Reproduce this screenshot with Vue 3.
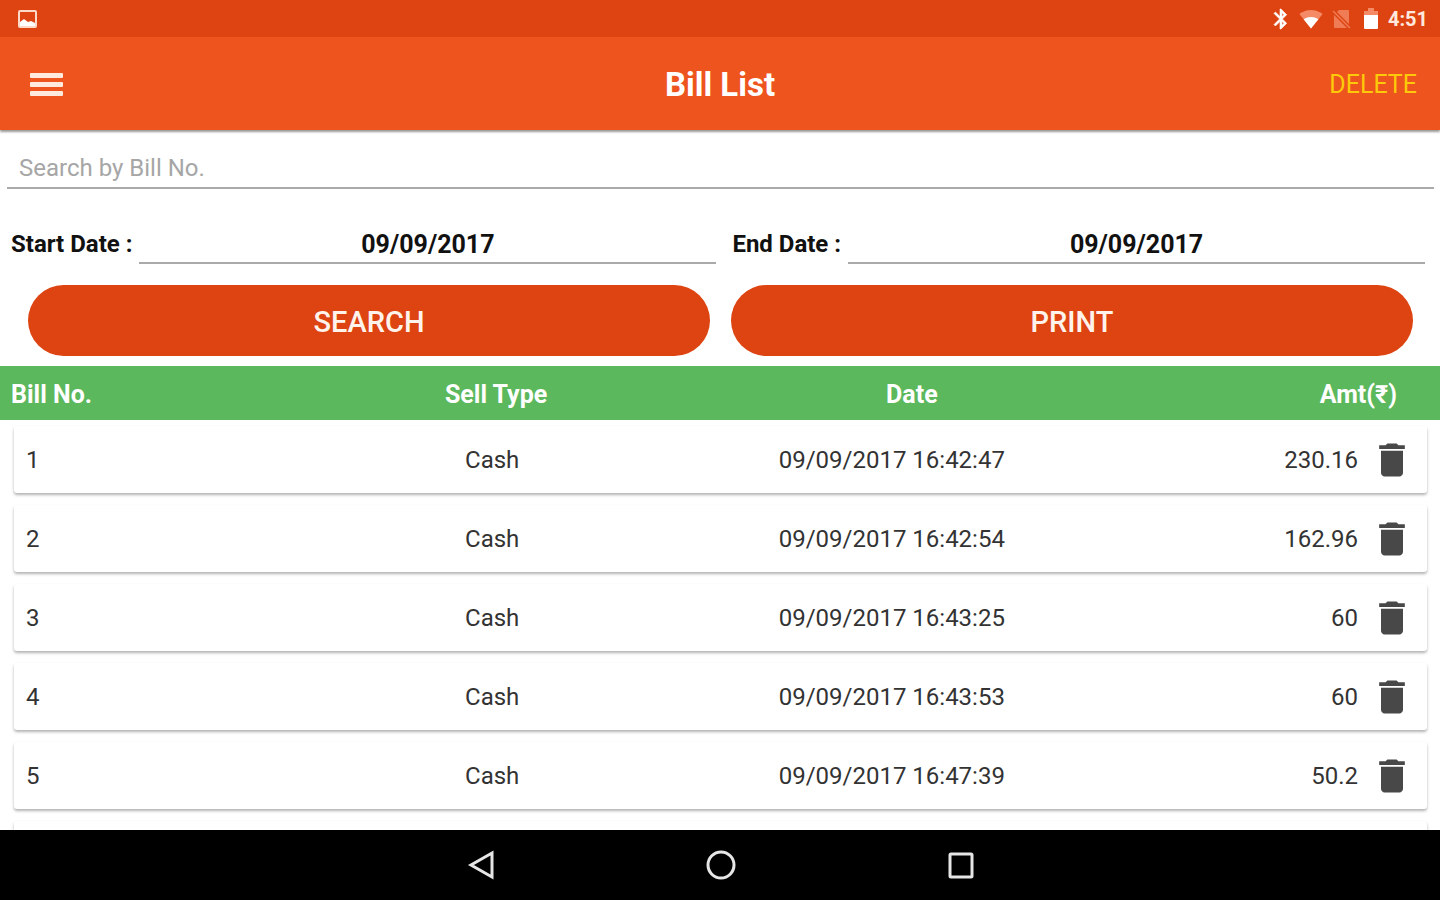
<template>
  <div class="screen">
    <div class="status-bar">
      <svg class="status-icon" viewBox="0 0 24 24">
        <rect x="4" y="4" width="17" height="16" rx="1" fill="none" stroke="#ffd9c8" stroke-width="2" />
        <path d="M5 19v-4l4-3 4 3 3-1 4 2v3z" fill="#fff" />
      </svg>
      <div class="status-right">
        <svg class="status-icon" viewBox="0 0 24 24">
          <path fill="#fff" stroke="#fff" stroke-width=".6" d="M17.71 7.71L12 2h-1v7.59L6.41 5 5 6.41 10.59 12 5 17.59 6.41 19 11 14.41V22h1l5.71-5.71-4.3-4.29 4.3-4.29zM13 5.83l1.88 1.88L13 9.59V5.83zm1.88 10.46L13 18.17v-3.76l1.88 1.88z" />
        </svg>
        <svg class="status-icon" viewBox="0 0 24 24">
          <path fill="#f58a66" d="M12 21.5L23.6 7C23.2 6.7 18.7 3 12 3S.8 6.7.4 7z" />
          <path fill="#fff" d="M12 21.5L19.4 12.2C18.8 11.7 16 10 12 10s-6.800 1.700-7.400 2.200z" />
        </svg>
        <svg class="status-icon" viewBox="0 0 24 24">
          <path fill="#f07c56" d="M10 3h9a1 1 0 0 1 1 1v13L8 5zM5 8l13 13H6a1 1 0 0 1-1-1z" />
          <path fill="none" stroke="#f07c56" stroke-width="1.500" d="M4 4l17 17" />
        </svg>
        <svg class="status-icon" viewBox="0 0 24 24">
          <path fill="#f58a66" d="M5 9V4h4V1h6v3h4v5z" />
          <path fill="#fff" d="M5 8h14v13a1 1 0 0 1-1 1H6a1 1 0 0 1-1-1z" />
        </svg>
        <span class="clock">4:51</span>
      </div>
    </div>

    <header class="app-bar">
      <button class="menu-btn" type="button" aria-label="Menu">
        <span></span>
        <span></span>
        <span></span>
      </button>
      <h1>Bill List</h1>
      <button class="delete-all" type="button">DELETE</button>
    </header>

    <form class="filters" @submit.prevent>
      <input v-model="billNo" class="line-input search-input" type="text" placeholder="Search by Bill No." aria-label="Search by Bill No." />
      <div class="dates">
        <label for="start">Start Date :</label>
        <input id="start" v-model="startDate" class="line-input" type="text" />
        <label for="end" class="end-label">End Date :</label>
        <input id="end" v-model="endDate" class="line-input" type="text" />
      </div>
      <div class="actions">
        <button type="submit">SEARCH</button>
        <button type="button">PRINT</button>
      </div>
    </form>

    <main class="list">
      <table>
        <thead>
          <tr>
            <th>Bill No.</th>
            <th>Sell Type</th>
            <th>Date</th>
            <th>Amt(₹)</th>
          </tr>
        </thead>
        <tbody>
          <tr v-for="bill in bills" :key="bill.no" class="card">
            <td>{{ bill.no }}</td>
            <td>{{ bill.type }}</td>
            <td>{{ bill.date }}</td>
            <td>{{ bill.amount }}</td>
            <td>
              <button class="trash" type="button" :aria-label="'Delete bill ' + bill.no" @click="removeBill(bill.no)">
                <svg viewBox="0 0 24 24">
                  <path d="M6 19c0 1.100.900 2 2 2h8c1.100 0 2-.900 2-2V7H6v12zM19 4h-3.500l-1-1h-5l-1 1H5v2h14V4z" />
                </svg>
              </button>
            </td>
          </tr>
        </tbody>
      </table>
      <div class="card"></div>
    </main>

    <nav class="nav-bar">
      <button type="button" aria-label="Back">
        <svg viewBox="0 0 32 32"><path d="M28 4v24L7 16z" /></svg>
      </button>
      <button type="button" aria-label="Home">
        <svg viewBox="0 0 32 32"><circle cx="17" cy="16" r="13" /></svg>
      </button>
      <button type="button" aria-label="Recent apps">
        <svg viewBox="0 0 32 32"><rect x="6" y="5" width="22" height="23" rx="1" /></svg>
      </button>
    </nav>
  </div>
</template>

<script setup>
import { ref } from 'vue'

const billNo = ref('')
const startDate = ref('09/09/2017')
const endDate = ref('09/09/2017')

const bills = ref([
  { no: 1, type: 'Cash', date: '09/09/2017 16:42:47', amount: '230.16' },
  { no: 2, type: 'Cash', date: '09/09/2017 16:42:54', amount: '162.96' },
  { no: 3, type: 'Cash', date: '09/09/2017 16:43:25', amount: '60' },
  { no: 4, type: 'Cash', date: '09/09/2017 16:43:53', amount: '60' },
  { no: 5, type: 'Cash', date: '09/09/2017 16:47:39', amount: '50.2' }
])

const removeBill = (no) => {
  bills.value = bills.value.filter((b) => b.no !== no)
}
</script>

<style>
body {
  margin: 0;
}
</style>

<style scoped>
.screen {
  display: flex;
  flex-direction: column;
  height: 100vh;
  background: #fff;
  color: #333;
  font-family: Roboto, "Noto Sans", sans-serif;
  font-size: 24px;
}

.screen * {
  box-sizing: border-box;
}

button,
input {
  margin: 0;
  padding: 0;
  border: 0;
  background: none;
  color: inherit;
  font: inherit;
}

button {
  cursor: pointer;
}

.status-bar {
  display: flex;
  align-items: center;
  justify-content: space-between;
  flex: none;
  height: 37px;
  padding: 0 12px 0 15px;
  background: #dd4411;
}

.status-right {
  display: flex;
  align-items: center;
  gap: 6px;
}

.status-icon {
  width: 24px;
  height: 24px;
}

.clock {
  margin-left: -1px;
  color: #ffe9df;
  font-size: 20px;
  font-weight: 700;
}

/* タイトルバー */
.app-bar {
  display: grid;
  grid-template-columns: 1fr auto 1fr;
  align-items: center;
  flex: none;
  height: 93px;
  padding: 2px 23px 0;
  background: #ee541d;
  box-shadow: 0 2px 2px rgba(0, 0, 0, 0.4);
  z-index: 1;
}

.menu-btn {
  display: flex;
  flex-direction: column;
  gap: 4px;
  width: 33px;
  margin-left: 7px;
}

.menu-btn span {
  height: 5px;
  border-radius: 1px;
  background: #ffeadd;
}

h1 {
  margin: 0;
  color: #fff;
  font-size: 33px;
  font-weight: 700;
}

.delete-all {
  justify-self: end;
  color: #fdc90a;
  font-size: 25px;
}

/* 検索条件 */
.filters {
  flex: none;
  padding-bottom: 10px;
}

.line-input {
  min-width: 0;
  border-bottom: 2px solid #aaa;
  outline: none;
}

.search-input {
  display: block;
  width: calc(100% - 13px);
  height: 59px;
  margin: 0 6px 0 7px;
  padding: 18px 12px 0;
}

.search-input::placeholder {
  color: #a6a6a6;
  opacity: 1;
}

.dates {
  display: grid;
  grid-template-columns: auto 1fr auto 1fr;
  align-items: center;
  gap: 7px;
  padding: 35px 15px 0 11px;
  color: #111;
  font-weight: 700;
}

.end-label {
  margin-left: 9px;
}

.dates input {
  height: 40px;
  padding-top: 2px;
  font-size: 25px;
  text-align: center;
}

.actions {
  display: grid;
  grid-template-columns: 1fr 1fr;
  gap: 21px;
  padding: 21px 27px 0 28px;
}

.actions button {
  height: 71px;
  padding-top: 2px;
  border-radius: 36px;
  background: #dd4411;
  color: #fff3ec;
  font-size: 29px;
  font-weight: 500;
}

/* 一覧 */
.list {
  flex: 1;
  min-height: 0;
  overflow-y: auto;
  scrollbar-width: none;
}

table,
thead,
tbody {
  display: block;
}

tr {
  display: grid;
  grid-template-columns: 2fr 3fr 3fr 2fr 43px;
  align-items: center;
}

thead {
  position: sticky;
  top: 0;
  z-index: 1;
}

thead tr {
  height: 54px;
  padding: 3px 0 0 11px;
  background: #5cb85c;
  color: #fff;
  font-size: 25px;
}

th,
td {
  padding: 0;
  text-align: center;
}

th:first-child,
td:first-child {
  text-align: left;
}

th:nth-child(4),
td:nth-child(4) {
  text-align: right;
}

tbody {
  padding-top: 6px;
}

.card {
  height: 67px;
  margin: 0 13px 12px 14px;
  border-radius: 3px;
  background: #fff;
  box-shadow: 0 2px 3px rgba(0, 0, 0, 0.3);
}

tbody tr {
  grid-template-columns: 2fr 3fr 3fr 2fr 69px;
  padding-left: 12px;
}

.trash {
  display: block;
  margin: 0 auto;
}

.trash svg {
  display: block;
  width: 44px;
  height: 44px;
  fill: #484848;
}

/* ナビゲーション */
.nav-bar {
  display: flex;
  align-items: center;
  justify-content: center;
  gap: 208px;
  flex: none;
  height: 70px;
  background: #000;
  z-index: 1;
}

.nav-bar svg {
  display: block;
  width: 32px;
  height: 32px;
  fill: none;
  stroke: #e6e6e6;
  stroke-width: 3;
}
</style>
